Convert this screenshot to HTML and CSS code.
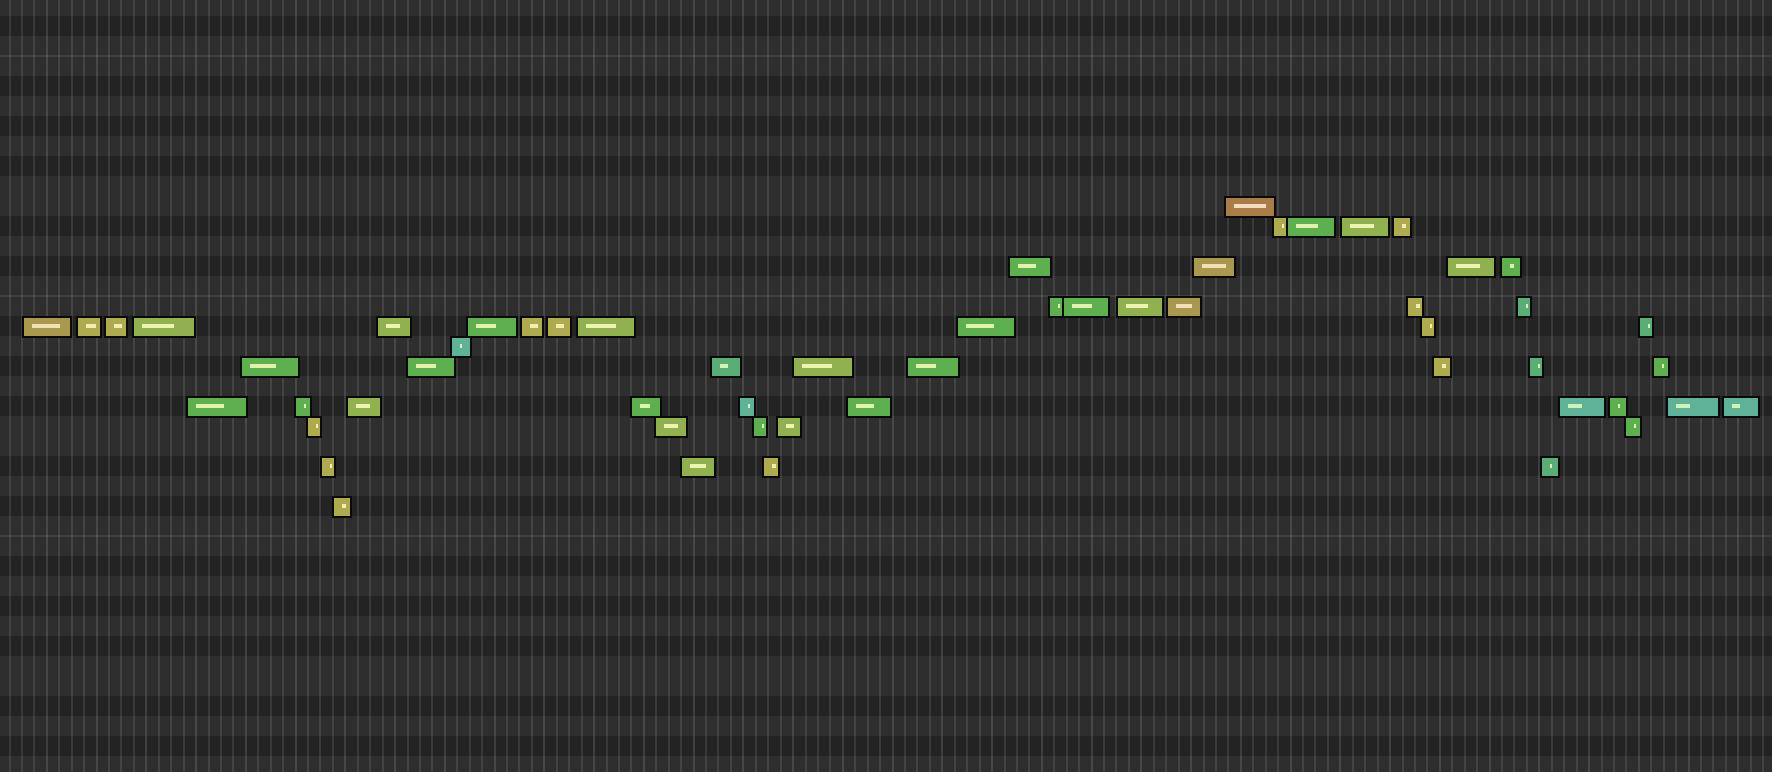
FILE: index.html
```html
<!DOCTYPE html>
<html>
<head>
<meta charset="utf-8">
<title>Piano roll</title>
<link rel="stylesheet" href="styles.css">
</head>
<body>
<div class="roll">
  <div class="rows">
    <div class="r"></div><div class="r d"></div><div class="r"></div>
    <div class="r o"></div><div class="r d"></div><div class="r"></div><div class="r d"></div><div class="r"></div><div class="r d"></div><div class="r"></div><div class="r"></div><div class="r d"></div><div class="r"></div><div class="r d"></div><div class="r"></div>
    <div class="r o"></div><div class="r d"></div><div class="r"></div><div class="r d"></div><div class="r"></div><div class="r d"></div><div class="r"></div><div class="r"></div><div class="r d"></div><div class="r"></div><div class="r d"></div><div class="r"></div>
    <div class="r o"></div><div class="r d"></div><div class="r"></div><div class="r d"></div><div class="r"></div><div class="r d"></div><div class="r"></div><div class="r"></div><div class="r d"></div><div class="r"></div><div class="r d"></div><div class="r"></div>
  </div>
  <div class="cols">
    <span class="c"></span><span class="c"></span><span class="c"></span><span class="c b"></span>
    <span class="c"></span><span class="c"></span><span class="c"></span><span class="c b"></span>
    <span class="c"></span><span class="c"></span><span class="c"></span><span class="c b"></span>
    <span class="c"></span><span class="c"></span><span class="c"></span><span class="c b"></span>
    <span class="c"></span><span class="c"></span><span class="c"></span><span class="c b"></span>
    <span class="c"></span><span class="c"></span><span class="c"></span><span class="c b"></span>
    <span class="c"></span><span class="c"></span><span class="c"></span><span class="c b"></span>
    <span class="c"></span><span class="c"></span><span class="c"></span><span class="c b"></span>
    <span class="c"></span><span class="c"></span><span class="c"></span><span class="c b"></span>
    <span class="c"></span><span class="c"></span><span class="c"></span><span class="c b"></span>
    <span class="c"></span><span class="c"></span><span class="c"></span><span class="c b"></span>
    <span class="c"></span><span class="c"></span><span class="c"></span><span class="c b"></span>
    <span class="c"></span><span class="c"></span><span class="c"></span><span class="c b"></span>
    <span class="c"></span><span class="c"></span><span class="c"></span><span class="c b"></span>
    <span class="c"></span><span class="c"></span><span class="c"></span><span class="c b"></span>
    <span class="c"></span><span class="c"></span><span class="c"></span><span class="c b"></span>
    <span class="c"></span><span class="c"></span><span class="c"></span><span class="c b"></span>
    <span class="c"></span><span class="c"></span><span class="c"></span><span class="c b"></span>
    <span class="c"></span><span class="c"></span><span class="c"></span><span class="c b"></span>
    <span class="c"></span><span class="c"></span><span class="c"></span><span class="c b"></span>
    <span class="c"></span><span class="c"></span><span class="c"></span><span class="c b"></span>
    <span class="c"></span><span class="c"></span><span class="c"></span><span class="c b"></span>
    <span class="c"></span><span class="c"></span><span class="c"></span><span class="c b"></span>
    <span class="c"></span><span class="c"></span><span class="c"></span><span class="c b"></span>
    <span class="c"></span><span class="c"></span><span class="c"></span><span class="c b"></span>
    <span class="c"></span><span class="c"></span><span class="c"></span><span class="c b"></span>
    <span class="c"></span><span class="c"></span><span class="c"></span><span class="c b"></span>
    <span class="c"></span><span class="c"></span><span class="c"></span><span class="c b"></span>
    <span class="c"></span><span class="c"></span><span class="c"></span><span class="c b"></span>
    <span class="c"></span><span class="c"></span><span class="c"></span><span class="c b"></span>
    <span class="c"></span><span class="c"></span><span class="c"></span><span class="c b"></span>
    <span class="c"></span><span class="c"></span><span class="c"></span><span class="c b"></span>
    <span class="c"></span><span class="c"></span><span class="c"></span><span class="c b"></span>
    <span class="c"></span><span class="c"></span><span class="c"></span><span class="c b"></span>
    <span class="c"></span><span class="c"></span><span class="c"></span><span class="c b"></span>
    <span class="c"></span><span class="c"></span>
  </div>
  <div class="notes">
    <div class="n tan" style="left:22px;top:316px;width:50px"><i style="width:28px"></i></div>
    <div class="n olive" style="left:76px;top:316px;width:26px"><i style="width:10px"></i></div>
    <div class="n olive" style="left:104px;top:316px;width:24px"><i style="width:8px"></i></div>
    <div class="n yg" style="left:132px;top:316px;width:64px"><i style="width:32px"></i></div>
    <div class="n green" style="left:186px;top:396px;width:62px"><i style="width:28px"></i></div>
    <div class="n green" style="left:240px;top:356px;width:60px"><i style="width:26px"></i></div>
    <div class="n green" style="left:294px;top:396px;width:18px"><i style="width:2px"></i></div>
    <div class="n olive" style="left:306px;top:416px;width:16px"><i style="width:2px"></i></div>
    <div class="n olive" style="left:320px;top:456px;width:16px"><i style="width:2px"></i></div>
    <div class="n olive" style="left:332px;top:496px;width:20px"><i style="width:4px"></i></div>
    <div class="n yg" style="left:346px;top:396px;width:36px"><i style="width:14px"></i></div>
    <div class="n yg" style="left:376px;top:316px;width:36px"><i style="width:14px"></i></div>
    <div class="n green" style="left:406px;top:356px;width:50px"><i style="width:20px"></i></div>
    <div class="n teal" style="left:450px;top:336px;width:22px"><i style="width:2px"></i></div>
    <div class="n green" style="left:466px;top:316px;width:52px"><i style="width:20px"></i></div>
    <div class="n olive" style="left:520px;top:316px;width:24px"><i style="width:8px"></i></div>
    <div class="n olive" style="left:546px;top:316px;width:26px"><i style="width:8px"></i></div>
    <div class="n yg" style="left:576px;top:316px;width:60px"><i style="width:30px"></i></div>
    <div class="n green" style="left:630px;top:396px;width:32px"><i style="width:10px"></i></div>
    <div class="n yg" style="left:654px;top:416px;width:34px"><i style="width:14px"></i></div>
    <div class="n yg" style="left:680px;top:456px;width:36px"><i style="width:16px"></i></div>
    <div class="n tg" style="left:710px;top:356px;width:32px"><i style="width:8px"></i></div>
    <div class="n teal" style="left:738px;top:396px;width:18px"><i style="width:2px"></i></div>
    <div class="n green" style="left:752px;top:416px;width:16px"><i style="width:2px"></i></div>
    <div class="n olive" style="left:762px;top:456px;width:18px"><i style="width:4px"></i></div>
    <div class="n yg" style="left:776px;top:416px;width:26px"><i style="width:8px"></i></div>
    <div class="n yg" style="left:792px;top:356px;width:62px"><i style="width:30px"></i></div>
    <div class="n green" style="left:846px;top:396px;width:46px"><i style="width:18px"></i></div>
    <div class="n green" style="left:906px;top:356px;width:54px"><i style="width:20px"></i></div>
    <div class="n green" style="left:956px;top:316px;width:60px"><i style="width:28px"></i></div>
    <div class="n green" style="left:1008px;top:256px;width:44px"><i style="width:18px"></i></div>
    <div class="n green" style="left:1048px;top:296px;width:16px"><i style="width:2px"></i></div>
    <div class="n green" style="left:1062px;top:296px;width:48px"><i style="width:20px"></i></div>
    <div class="n yg" style="left:1116px;top:296px;width:48px"><i style="width:22px"></i></div>
    <div class="n tan" style="left:1166px;top:296px;width:36px"><i style="width:16px"></i></div>
    <div class="n tan" style="left:1192px;top:256px;width:44px"><i style="width:24px"></i></div>
    <div class="n brown" style="left:1224px;top:196px;width:52px"><i style="width:32px"></i></div>
    <div class="n olive" style="left:1272px;top:216px;width:16px"><i style="width:2px"></i></div>
    <div class="n green" style="left:1286px;top:216px;width:50px"><i style="width:22px"></i></div>
    <div class="n yg" style="left:1340px;top:216px;width:50px"><i style="width:24px"></i></div>
    <div class="n olive" style="left:1392px;top:216px;width:20px"><i style="width:4px"></i></div>
    <div class="n olive" style="left:1406px;top:296px;width:18px"><i style="width:4px"></i></div>
    <div class="n olive" style="left:1420px;top:316px;width:16px"><i style="width:2px"></i></div>
    <div class="n olive" style="left:1432px;top:356px;width:20px"><i style="width:4px"></i></div>
    <div class="n yg" style="left:1446px;top:256px;width:50px"><i style="width:24px"></i></div>
    <div class="n green" style="left:1500px;top:256px;width:22px"><i style="width:4px"></i></div>
    <div class="n tg" style="left:1516px;top:296px;width:16px"><i style="width:2px"></i></div>
    <div class="n tg" style="left:1528px;top:356px;width:16px"><i style="width:2px"></i></div>
    <div class="n tg" style="left:1540px;top:456px;width:20px"><i style="width:2px"></i></div>
    <div class="n teal" style="left:1558px;top:396px;width:48px"><i style="width:14px"></i></div>
    <div class="n green" style="left:1608px;top:396px;width:20px"><i style="width:2px"></i></div>
    <div class="n green" style="left:1624px;top:416px;width:18px"><i style="width:2px"></i></div>
    <div class="n tg" style="left:1638px;top:316px;width:16px"><i style="width:2px"></i></div>
    <div class="n green" style="left:1652px;top:356px;width:18px"><i style="width:2px"></i></div>
    <div class="n teal" style="left:1666px;top:396px;width:54px"><i style="width:14px"></i></div>
    <div class="n teal" style="left:1722px;top:396px;width:38px"><i style="width:8px"></i></div>
  </div>
</div>
</body>
</html>
```
FILE: styles.css
```css
html, body {
  margin: 0;
  padding: 0;
  background: #2e2e2e;
  overflow: hidden;
}

.roll {
  position: relative;
  width: 1772px;
  height: 772px;
  overflow: hidden;
  background: #2e2e2e;
}

.rows {
  display: flex;
  flex-direction: column;
  margin-top: -4px;
}

.r {
  flex: none;
  height: 20px;
  background: #2e2e2e;
}

.r.d {
  background: #232323;
}

.r.o {
  box-shadow: 0 -1px 0 #404040, inset 0 1px 0 #404040;
}

.cols {
  position: absolute;
  top: 0;
  left: 0;
  right: 0;
  bottom: 0;
  display: flex;
  padding-left: 8.5px;
}

.c {
  flex: none;
  width: 12.4375px;
  box-sizing: border-box;
  border-left: 2px solid rgba(255, 255, 255, 0.1);
}

.c.b {
  border-left-color: rgba(255, 255, 255, 0.125);
}

.notes {
  position: absolute;
  top: 0;
  left: 0;
  right: 0;
  bottom: 0;
}

.n {
  position: absolute;
  height: 22px;
  box-sizing: border-box;
  border: 2px solid #0a0a0a;
  padding: 6px 0 0 8px;
}

.n i {
  display: block;
  height: 4px;
}

.brown { background: #a97c48; }
.brown i { background: #f3dcc0; }

.tan { background: #aa984e; }
.tan i { background: #efe2b6; }

.olive { background: #adaa4f; }
.olive i { background: #f2eeb2; }

.yg { background: #91b04f; }
.yg i { background: #eef4b0; }

.green { background: #5eaf50; }
.green i { background: #e2f2ae; }

.tg { background: #5aad76; }
.tg i { background: #d4f2b4; }

.teal { background: #5fb298; }
.teal i { background: #cdf2ba; }
```
